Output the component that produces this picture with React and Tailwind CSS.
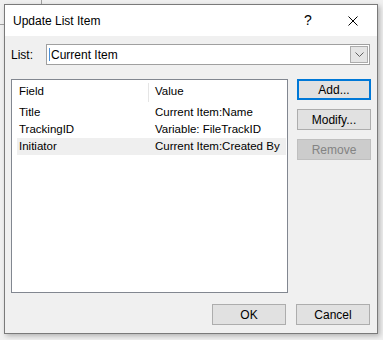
import React from "react";

const font = { fontFamily: '"Segoe UI", "Liberation Sans", Arial, sans-serif' };

const rows = [
  { field: "Title", value: "Current Item:Name" },
  { field: "TrackingID", value: "Variable: FileTrackID" },
  { field: "Initiator", value: "Current Item:Created By", selected: true },
];

const Button = ({ children, primary, disabled }) => (
  <button
    className={
      "w-[74px] h-[21px] flex items-center justify-center text-[12px] leading-none whitespace-nowrap " +
      (primary
        ? "border-2 border-[#0078d7] bg-[#e1e1e1] text-black"
        : disabled
        ? "border border-[#bfbfbf] bg-[#cccccc] text-[#838383]"
        : "border border-[#adadad] bg-[#e1e1e1] text-black")
    }
  >
    {children}
  </button>
);

export default function App() {
  return (
    <div
      className="relative w-[383px] h-[340px] bg-[#f0f0f0] overflow-hidden"
      style={font}
    >
      {/* desktop behind the dialog */}
      <div className="absolute left-[41px] top-0 w-px h-[5px] bg-[#a0a0a0]" />
      <div className="absolute left-0 top-[24px] w-[5px] h-px bg-[#a0a0a0]" />

      <div className="absolute left-[4px] top-[4px] w-[374px] h-[330px] border border-[#7a7a7a] bg-[#f0f0f0] shadow-[2px_2px_5px_rgba(0,0,0,0.25)] flex flex-col">
        {/* title bar */}
        <div className="h-[31px] bg-white flex items-center pl-[8px] shrink-0">
          <span className="text-[12px] text-black flex-1 whitespace-nowrap">Update List Item</span>
          <span className="text-[14px] text-black w-[10px] mr-[34px]">?</span>
          <svg width="10" height="10" viewBox="0 0 10 10" className="mr-[19px]">
            <path d="M0.5 0.5 L9.5 9.5 M9.5 0.5 L0.5 9.5" stroke="#000" strokeWidth="1" />
          </svg>
        </div>

        {/* body */}
        <div className="flex-1 flex flex-col px-[6px]">
          <div className="flex items-center mt-[8px] h-[21px]">
            <span className="text-[12px] text-black w-[35px]">List:</span>
            <div className="flex-1 h-[21px] mr-[1px] border border-[#a0a0a0] bg-white flex items-center pl-[2px] pr-[1px]">
              <span className="w-px h-[13px] bg-[#4a90d9] mr-px" />
              <span className="text-[12px] text-black flex-1 whitespace-nowrap">Current Item</span>
              <div className="w-[18px] h-[17px] border border-[#acacac] bg-[#e5e5e5] flex items-center justify-center">
                <svg width="9" height="5" viewBox="0 0 9 5">
                  <path d="M0.5 0.5 L4.5 4.5 L8.5 0.5" stroke="#606060" strokeWidth="1" fill="none" />
                </svg>
              </div>
            </div>
          </div>

          <div className="flex mt-[14px] gap-[9px]">
            <div className="w-[277px] h-[214px] border border-[#828790] bg-white pl-[5px] pr-[1px]">
              <div className="h-[24px] flex items-center text-[11.5px] text-black">
                <span className="w-[131px] pl-[2px]">Field</span>
                <span className="w-px h-[19px] bg-[#e5e5e5]" />
                <span className="pl-[6px]">Value</span>
              </div>
              {rows.map((r) => (
                <div
                  key={r.field}
                  className={
                    "h-[17px] flex items-center text-[11.5px] text-black whitespace-nowrap " +
                    (r.selected ? "bg-[#efefef]" : "")
                  }
                >
                  <span className="w-[138px] shrink-0 pl-[2px]">{r.field}</span>
                  <span>{r.value}</span>
                </div>
              ))}
            </div>
            <div className="flex flex-col gap-[9px]">
              <Button primary>Add...</Button>
              <Button>Modify...</Button>
              <Button disabled>Remove</Button>
            </div>
          </div>

          <div className="flex justify-end gap-[10px] mt-[11px] mr-[1px]">
            <Button>OK</Button>
            <Button>Cancel</Button>
          </div>
        </div>
      </div>
    </div>
  );
}
